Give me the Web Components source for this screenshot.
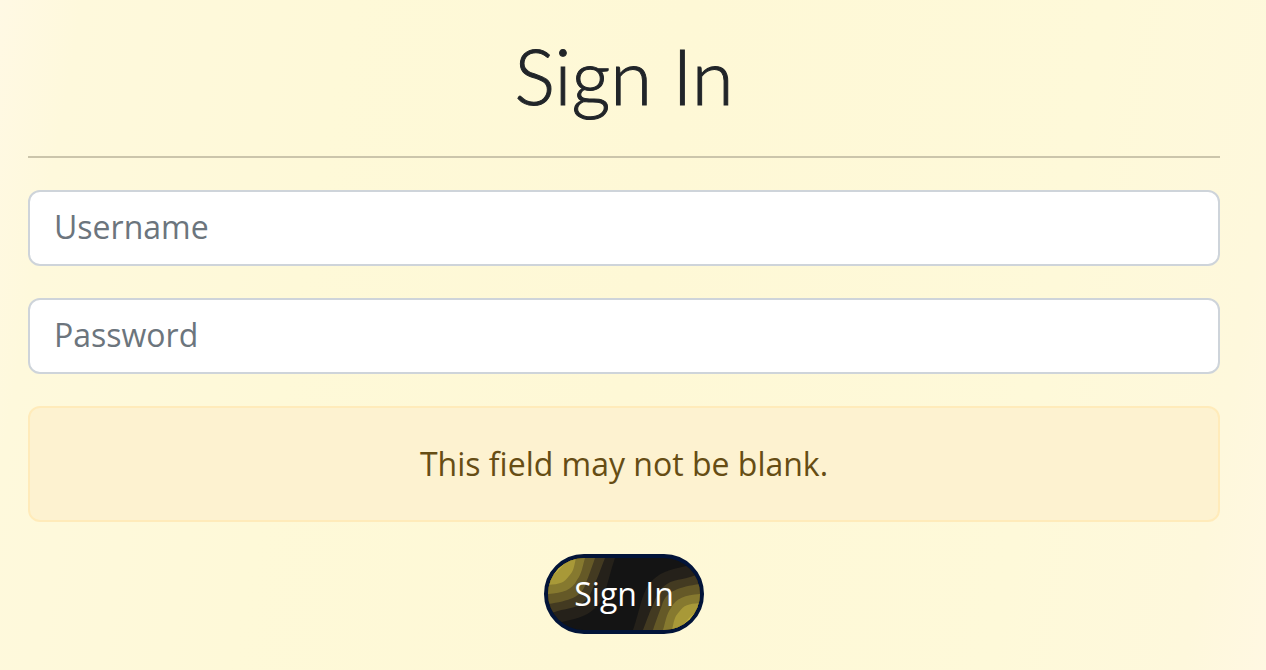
<!DOCTYPE html>
<html lang="en">
<head>
<meta charset="utf-8">
<meta name="viewport" content="width=device-width, initial-scale=1">
<title>Sign In</title>
<style>
html { min-height: 100%; background: linear-gradient(100deg, #fff9e4 0%, #fef9dc 6%, #fef9d8 25%, #fef8d6 50%, #fef9d9 80%, #fef8dc 94%, #fff8e2 100%); }
body { margin: 0; font: 32px/48px "Open Sans", sans-serif; color: #212529; }
</style>
</head>
<body>
<sign-in-page></sign-in-page>
<script>
const define = (name, html) => customElements.define(name, class extends HTMLElement {
  constructor() {
    super();
    const template = document.createElement('template');
    template.innerHTML = html;
    this.attachShadow({ mode: 'open' }).append(template.content.cloneNode(true));
  }
});

define('page-heading', `
<style>
:host { display: block; border-bottom: 2px solid #cbc5ab; }
h1 { margin: 0; padding: 28px 0 32px; font: 300 76px/96px Lato, sans-serif; -webkit-text-stroke: 1px #212529; text-align: center; }
</style>
<h1><slot></slot></h1>`);

customElements.define('text-field', class extends HTMLElement {
  constructor() {
    super();
    this.attachShadow({ mode: 'open' }).innerHTML = `
<style>
:host { display: block; }
input { display: block; box-sizing: border-box; width: 100%; height: 76px; padding: 10px 24px 14px; border: 2px solid #ced4da; border-radius: 12px; background: #fff; color: inherit; font: inherit; outline: none; }
input:focus { border-color: #86b7fe; }
input::placeholder { color: #6c757d; opacity: 1; }
</style>
<input>`;
    const input = this.shadowRoot.querySelector('input');
    input.type = this.getAttribute('type');
    input.name = this.getAttribute('name');
    input.placeholder = this.getAttribute('label');
    input.setAttribute('aria-label', this.getAttribute('label'));
  }
});

define('alert-message', `
<style>
:host { display: block; padding: 32px; border: 2px solid #ffebba; border-radius: 12px; background: #fdf2d0; color: #664d14; text-align: center; }
</style>
<div role="alert"><slot></slot></div>`);

define('pill-button', `
<style>
:host { display: block; }
button { display: grid; place-items: center; box-sizing: border-box; min-width: 160px; height: 80px; padding: 0; border: 4px solid #021439; border-radius: 40px; background: #141414; color: #fff; font: inherit; overflow: hidden; cursor: pointer; }
svg, span { grid-area: 1 / 1; }
svg { width: 100%; height: 72px; }
span { padding: 0 24px; }
</style>
<button type="submit">
<svg viewBox="0 0 152 72" preserveAspectRatio="none" aria-hidden="true">
<defs><g id="waves">
<path fill="#25211a" d="M0 0H67C60 20 59 34 51 46C41 58 31 60 14 64L0 66Z"/>
<path fill="#433a21" d="M0 0H57C52 13 50 19 47 25C43 35 41 41 33 46C24 52 12 50 0 57Z"/>
<path fill="#655927" d="M0 0H47C43 12 41 17 38 25C34 39 21 43 0 46Z"/>
<path fill="#86792f" d="M0 0H37C34 10 34 15 29 22C24 32 15 35 0 36Z"/>
<path fill="#a89938" d="M0 0H28C26 8 26 13 21 18C16 25 12 26 0 27Z"/>
<path fill="#c3b441" d="M0 0H17C17 7 13 9 9 14L0 19Z"/>
</g></defs>
<use href="#waves"/><use href="#waves" transform="rotate(180 76 36)"/>
</svg>
<span><slot></slot></span>
</button>`);

define('sign-in-page', `
<style>
:host { display: block; padding: 0 46px 36px 28px; }
form { display: flex; flex-direction: column; gap: 32px; }
pill-button { align-self: center; }
</style>
<form onsubmit="return false">
<page-heading>Sign In</page-heading>
<text-field type="text" name="username" label="Username"></text-field>
<text-field type="password" name="password" label="Password"></text-field>
<alert-message>This field may not be blank.</alert-message>
<pill-button>Sign In</pill-button>
</form>`);
</script>
</body>
</html>
